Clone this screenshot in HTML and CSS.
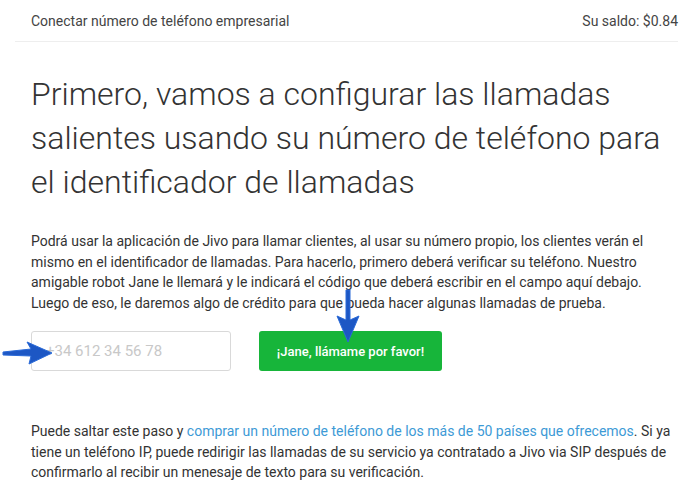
FILE: index.html
```html
<!DOCTYPE html>
<html lang="es">
<head>
  <meta charset="UTF-8">
  <meta name="viewport" content="width=device-width, initial-scale=1.0">
  <title>Conectar número de teléfono empresarial</title>
  <link rel="stylesheet" href="styles.css">
</head>
<body>
  <div class="topbar">
    <span>Conectar número de teléfono empresarial</span>
    <span>Su saldo: $0.84</span>
  </div>

  <div class="content">
    <h1>Primero, vamos a configurar las llamadas salientes usando su número de teléfono para el identificador de llamadas</h1>

    <p>Podrá usar la aplicación de Jivo para llamar clientes, al usar su número propio, los clientes verán el mismo en el identificador de llamadas. Para hacerlo, primero deberá verificar su teléfono. Nuestro amigable robot Jane le llemará y le indicará el código que deberá escribir en el campo aquí debajo. Luego de eso, le daremos algo de crédito para que pueda hacer algunas llamadas de prueba.</p>

    <div class="verify">
      <input type="tel" class="phone" placeholder="+34 612 34 56 78">
      <button type="button" class="call-btn">¡Jane, llámame por favor!</button>
    </div>

    <p class="note">Puede saltar este paso y <a href="#">comprar un número de teléfono de los más de 50 países que ofrecemos</a>. Si ya tiene un teléfono IP, puede redirigir las llamadas de su servicio ya contratado a Jivo via SIP después de confirmarlo al recibir un menesaje de texto para su verificación.</p>
  </div>

  <!-- flechas de anotación -->
  <svg class="arrow arrow-right" width="54" height="26" viewBox="0 0 54 26">
    <path d="M2 12 L30 9 L26 2 L51 13 L28 24 L30 16 L2 15 Z" fill="#1d57c4" stroke="#2a6ad8" stroke-width="1" stroke-linejoin="round"/>
  </svg>
  <svg class="arrow arrow-down" width="28" height="56" viewBox="0 0 28 56">
    <path d="M12 2 L16 2 L16 32 L25 28 L14 54 L3 28 L12 32 Z" fill="#1d57c4" stroke="#2a6ad8" stroke-width="1" stroke-linejoin="round"/>
  </svg>
</body>
</html>
```

FILE: styles.css
```css
body {
  font-family: Roboto, Arial, sans-serif;
  margin: 0;
  background-color: #FFFFFF;
  color: #333;
  position: relative;
  overflow: hidden;
}
.topbar {
  display: flex;
  justify-content: space-between;
  align-items: center;
  margin: 0 22px 0 15px;
  padding: 0 0 0 16px;
  height: 41px;
  border-bottom: 1px solid #eeeeee;
  font-size: 14px;
  color: #444;
}
.content {
  padding: 30px 22px 0 31px;
}
h1 {
  font-size: 32px;
  font-weight: 300;
  line-height: 44px;
  margin: 0 0 27px;
  color: #333;
}
p {
  font-size: 14px;
  line-height: 20.5px;
  margin: 0;
  color: #333;
}
.verify {
  display: flex;
  gap: 28px;
  margin-top: 18px;
  margin-bottom: 50px;
}
.phone {
  width: 200px;
  height: 40px;
  box-sizing: border-box;
  border: 1px solid #d9d9d9;
  border-radius: 3px;
  padding: 0 14px;
  font-family: Roboto, Arial, sans-serif;
  font-size: 15px;
  color: #333;
}
.phone::placeholder {
  color: #c8c8c8;
}
.call-btn {
  width: 183px;
  height: 40px;
  background-color: #17b53a;
  color: white;
  border: none;
  border-radius: 3px;
  font-family: Roboto, Arial, sans-serif;
  font-weight: 500;
  font-size: 13px;
  cursor: pointer;
}
.note a {
  color: #3d9ad6;
  text-decoration: none;
}
.arrow {
  position: absolute;
}
.arrow-right {
  left: 1px;
  top: 340px;
}
.arrow-down {
  left: 334px;
  top: 288px;
}
```
